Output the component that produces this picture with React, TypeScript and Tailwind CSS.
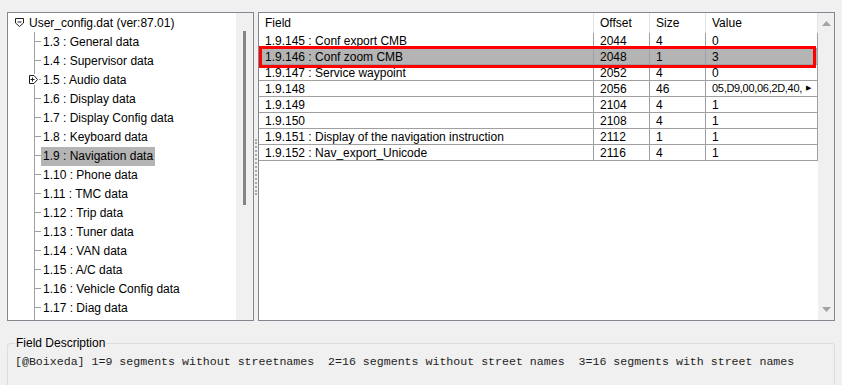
import React from 'react';

const treeItems = [
  '1.3 : General data',
  '1.4 : Supervisor data',
  '1.5 : Audio data',
  '1.6 : Display data',
  '1.7 : Display Config data',
  '1.8 : Keyboard data',
  '1.9 : Navigation data',
  '1.10 : Phone data',
  '1.11 : TMC data',
  '1.12 : Trip data',
  '1.13 : Tuner data',
  '1.14 : VAN data',
  '1.15 : A/C data',
  '1.16 : Vehicle Config data',
  '1.17 : Diag data',
];

const rows = [
  { field: '1.9.145 : Conf export CMB', offset: '2044', size: '4', value: '0' },
  { field: '1.9.146 : Conf zoom CMB', offset: '2048', size: '1', value: '3' },
  { field: '1.9.147 : Service waypoint', offset: '2052', size: '4', value: '0' },
  { field: '1.9.148', offset: '2056', size: '46', value: '05,D9,00,06,2D,40,', more: true },
  { field: '1.9.149', offset: '2104', size: '4', value: '1' },
  { field: '1.9.150', offset: '2108', size: '4', value: '1' },
  { field: '1.9.151 : Display of the navigation instruction', offset: '2112', size: '1', value: '1' },
  { field: '1.9.152 : Nav_export_Unicode', offset: '2116', size: '4', value: '1' },
];

const CollapseIcon = () => (
  <svg width="11" height="11" viewBox="0 0 11 11" className="shrink-0">
    <path d="M1.5 1.5H9.5V6L5.5 9.5L1.5 6Z" fill="white" stroke="#1e1e1e" />
    <path d="M3.5 5H7.5" stroke="#1e1e1e" />
  </svg>
);

const ExpandIcon = () => (
  <svg width="11" height="11" viewBox="0 0 11 11" className="shrink-0">
    <path d="M1.5 1.5H6L9.5 5.5L6 9.5H1.5Z" fill="white" stroke="#1e1e1e" />
    <path d="M2.5 5.5H6.5M4.5 3.5V7.5" stroke="#1e1e1e" />
  </svg>
);

const TreePanel = () => (
  <div className="flex w-[247px] h-full border border-[#828790] bg-white">
    <div className="relative flex-1 overflow-hidden">
      {/* connector line */}
      <div className="absolute left-[26px] top-[19px] bottom-0 w-px bg-[#a0a0a0]" />
      <div className="flex items-center h-[19px] pl-[6px] gap-[4px]">
        <CollapseIcon />
        <span>User_config.dat (ver:87.01)</span>
      </div>
      {treeItems.map((item, i) => (
        <div key={i} className="relative flex items-center h-[19px] pl-[33px] pt-px">
          <div className="absolute left-[27px] top-[9px] w-[6px] h-px bg-[#a0a0a0]" />
          {i === 2 && (
            <div className="absolute left-[20px] top-[4px] bg-white">
              <ExpandIcon />
            </div>
          )}
          <span className={i === 6 ? 'bg-[#b4b4b4] h-[19px] flex items-center px-[2px]' : 'px-[2px]'}>
            {item}
          </span>
        </div>
      ))}
    </div>
    <div className="w-[17px] h-full bg-[#f0f0f0] flex justify-center pt-[18px]">
      <div className="w-[3px] h-[174px] bg-[#858585]" />
    </div>
  </div>
);

const Cell = ({ children, className = '' }: { children: React.ReactNode; className?: string }) => (
  <div className={'h-full flex items-center px-[6px] border-r border-[#a0a0a0] whitespace-nowrap overflow-hidden ' + className}>
    {children}
  </div>
);

const TablePanel = () => (
  <div className="flex flex-1 h-full border border-[#828790] bg-white">
    <div className="relative w-[559px]">
      <div className="grid grid-cols-[335px_56px_56px_112px] h-[20px]">
        <Cell className="border-[#e5e5e5]">Field</Cell>
        <Cell className="border-[#e5e5e5]">Offset</Cell>
        <Cell className="border-[#e5e5e5]">Size</Cell>
        <Cell className="border-[#e5e5e5]">Value</Cell>
      </div>
      {rows.map((r, i) => (
        <div
          key={i}
          className={
            'grid grid-cols-[335px_56px_56px_112px] h-[16px] border-b border-[#a0a0a0] ' +
            (i === 1 ? 'bg-[#b4b4b4]' : '')
          }
        >
          <Cell>{r.field}</Cell>
          <Cell>{r.offset}</Cell>
          <Cell>{r.size}</Cell>
          <Cell className="gap-[4px] pr-[4px]">
            <span className={r.more ? 'text-[11px] tracking-[-0.3px]' : ''}>{r.value}</span>
            {r.more && <span className="shrink-0 text-[7px]">▶</span>}
          </Cell>
        </div>
      ))}
      <div className="absolute left-0 top-[33px] w-[557px] h-[22px] border-[3px] border-[#ff0000]" />
    </div>
    <div className="flex-1 h-full bg-[#f0f0f0] flex flex-col items-center justify-between py-[8px]">
      <svg width="9" height="5" viewBox="0 0 9 5">
        <path d="M0 5L4.5 0L9 5Z" fill="#a3a3a3" />
      </svg>
      <svg width="9" height="5" viewBox="0 0 9 5">
        <path d="M0 0L4.5 5L9 0Z" fill="#a3a3a3" />
      </svg>
    </div>
  </div>
);

export default function App() {
  return (
    <div
      className="w-[842px] h-[385px] overflow-hidden bg-[#f0f0f0] text-[12px] text-black"
      style={{ fontFamily: '"Segoe UI", "Liberation Sans", Arial, sans-serif' }}
    >
      <div className="flex h-[309px] mt-[12px] ml-[7px] mr-[7px]">
        <TreePanel />
        <div className="w-[4px] flex items-center justify-center">
          <div className="w-0 h-[56px] border-l-2 border-dotted border-[#a8a8a8]" />
        </div>
        <TablePanel />
      </div>
      <fieldset className="mx-[7px] mt-[15px] h-[80px] border border-[#dcdcdc] rounded-[3px] px-[8px]">
        <legend className="ml-[-1px] px-[1px] leading-[14px]">Field Description</legend>
        <div
          className="mt-[3px] text-[11.6px] text-[#1e1e1e] whitespace-pre -ml-px"
          style={{ fontFamily: '"Liberation Mono", "Courier New", monospace' }}
        >
          {'[@Boixeda] 1=9 segments without streetnames  2=16 segments without street names  3=16 segments with street names'}
        </div>
      </fieldset>
    </div>
  );
}
